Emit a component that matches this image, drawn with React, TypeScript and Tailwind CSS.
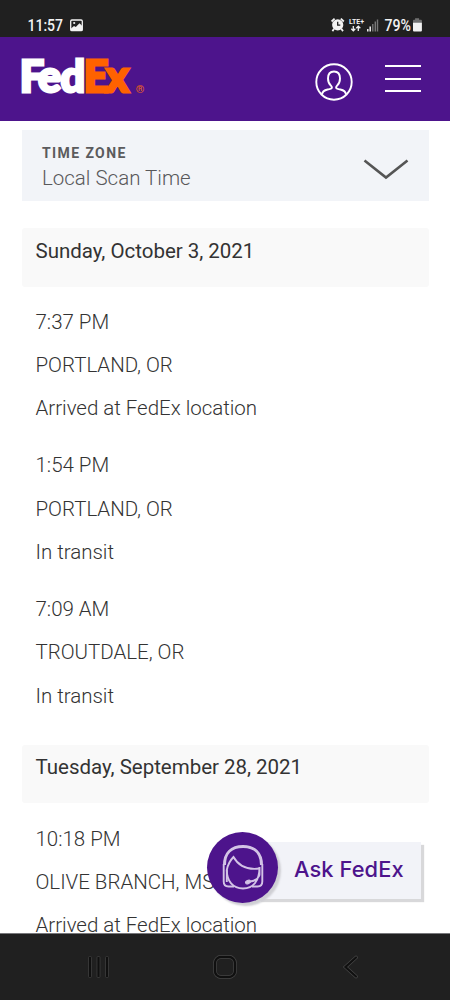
interface ScanEvent {
    time: string;
    place: string;
    status: string;
}

interface ScanDay {
    date: string;
    events: ScanEvent[];
}

const days: ScanDay[] = [
    {
        date: 'Sunday, October 3, 2021',
        events: [
            { time: '7:37 PM', place: 'PORTLAND, OR', status: 'Arrived at FedEx location' },
            { time: '1:54 PM', place: 'PORTLAND, OR', status: 'In transit' },
            { time: '7:09 AM', place: 'TROUTDALE, OR', status: 'In transit' },
        ],
    },
    {
        date: 'Tuesday, September 28, 2021',
        events: [
            { time: '10:18 PM', place: 'OLIVE BRANCH, MS', status: 'Arrived at FedEx location' },
        ],
    },
];

function StatusBar() {
    return (
        <div className="flex h-[37px] shrink-0 items-start justify-between bg-[#202020] pt-[15px] pr-[26px] pl-[28px] text-[#f2f2f2]">
            <svg width="60" height="20" viewBox="0 0 60 20">
                <text x="-0.5" y="15.5" textLength="35.5" lengthAdjust="spacingAndGlyphs" fontSize="16.5" fontWeight="500" fill="currentColor" fontFamily="Roboto, sans-serif">11:57</text>
                <rect x="42.7" y="5" width="11.6" height="10.6" rx="1.2" fill="none" stroke="currentColor" strokeWidth="1.3" />
                <circle cx="46.2" cy="8" r="1.1" fill="currentColor" />
                <path d="M43 13.5l3-2.6 1.8 1.2 3.7-3.8 2.8 2.7v4.4H43z" fill="currentColor" />
            </svg>
            <svg width="94" height="20" viewBox="0 0 94 20" fill="currentColor" fontFamily="Roboto, sans-serif">
                <circle cx="7.7" cy="9.9" r="5.6" />
                <path d="M7.7 6.8v3.4h2.6" fill="none" stroke="#202020" strokeWidth="1.3" />
                <path d="M1.6 6.5l3-2.8M13.8 6.5l-3-2.8M4.1 13.8l-1.7 2.3M11.3 13.8l1.7 2.3" fill="none" stroke="currentColor" strokeWidth="1.8" />
                <text x="19" y="9.2" textLength="15" lengthAdjust="spacingAndGlyphs" fontSize="7.8" fontWeight="700">LTE+</text>
                <path d="M23.3 11v4.8M21.3 13.7l2 2.2 2-2.2M28.3 16v-4.8M26.3 13.3l2-2.2 2 2.2" fill="none" stroke="currentColor" strokeWidth="1.3" />
                <path d="M37.8 14v2.4M40.2 11.4v5" fill="none" stroke="currentColor" strokeWidth="1.5" />
                <path d="M42.8 9v7.4M45.3 6.6v9.8M47.5 4.4v12" fill="none" stroke="#777777" strokeWidth="1.4" />
                <text x="54.5" y="15.5" textLength="26.5" lengthAdjust="spacingAndGlyphs" fontSize="16.5" fontWeight="500">79%</text>
                <path d="M85.1 3.3h4v1.5H91a.9.9 0 0 1 .9.9v2.6H83V5.7a.9.9 0 0 1 .9-.9h1.2z" fill="#707070" />
                <path d="M83 7.8h8.9v7.8a1 1 0 0 1-1 1H84a1 1 0 0 1-1-1z" />
            </svg>
        </div>
    );
}

function Header() {
    return (
        <header className="flex h-[84px] shrink-0 items-center justify-between bg-[#4d148c] pr-[29px] pl-[16px]">
            <svg width="134" height="66" viewBox="0 0 134 66" fontFamily="Lato, sans-serif" fontWeight="900" fontSize="43">
                <text x="3.7 22 44.6 67.8 90" y="46" fill="#ffffff" stroke="#ffffff" strokeWidth="2.8">
                    Fed<tspan fill="#ff6200" stroke="#ff6200">Ex</tspan>
                </text>
                <text x="119.8" y="47" fontFamily="Roboto, sans-serif" fontSize="11" fontWeight="700" fill="#e8601c">®</text>
            </svg>
            <div className="flex items-center gap-[32px]">
                <svg width="38" height="38" viewBox="0 0 38 38" fill="none" stroke="#ffffff" strokeWidth="1.9" className="mt-[6px]">
                    <circle cx="19" cy="19" r="17.7" />
                    <path d="M7 31.5c.3-3 2.4-4.3 5.6-5 2.7-.5 4.3-.6 4.3-2 0-.8-.4-1.2-1-1.8-1.8-1.8-2.9-4-2.9-7.2 0-4.4 2.3-7 6-7s6 2.6 6 7c0 3.2-1.1 5.4-2.9 7.2-.6.6-1 1-1 1.8 0 1.4 1.6 1.5 4.3 2 3.2.7 5.3 2 5.6 5" />
                </svg>
                <div className="mb-[1px] flex w-[36px] flex-col gap-[10.5px]">
                    <div className="h-[2px] bg-white" />
                    <div className="h-[2px] bg-white" />
                    <div className="h-[2px] bg-white" />
                </div>
            </div>
        </header>
    );
}

function TimeZoneSelect() {
    return (
        <div className="flex h-[71px] items-center justify-between bg-[#f2f4f8] pr-[20px] pl-[20.5px]">
            <div className="mt-[4px]">
                <div className="text-[14px] leading-[19px] font-bold tracking-[1.4px] text-[#5b5b5d]">TIME ZONE</div>
                <div className="mt-[1px] text-[20.5px] leading-[28px] font-light text-[#58585a]">Local Scan Time</div>
            </div>
            <svg width="46" height="22" viewBox="0 0 46 22" fill="none" stroke="#555555" strokeWidth="2.6" className="mt-[8px]">
                <path d="M1.5 1.5L23 18.5 44.5 1.5" />
            </svg>
        </div>
    );
}

function DaySection({ day }: { day: ScanDay }) {
    return (
        <section className="mt-[27px]">
            <h2 className="h-[58.5px] rounded-[3px] bg-[#f9f9f9] pt-[7.5px] pl-[14px] text-[20.5px] leading-[30px] font-normal tracking-[-0.02px] text-[#333333]">{day.date}</h2>
            {day.events.map((event) => (
                <div key={event.time} className="pt-[14.2px] pl-[14px] text-[20.5px] leading-[43.2px] font-light tracking-[-0.02px] text-[#333333]">
                    <div>{event.time}</div>
                    <div>{event.place}</div>
                    <div>{event.status}</div>
                </div>
            ))}
        </section>
    );
}

function AskButton() {
    return (
        <button className="absolute right-[29px] bottom-[30px] flex h-[72px] items-center">
            <span className="relative z-10 flex size-[71px] items-center justify-center rounded-full bg-[#4d148c] shadow-[3px_3px_2px_#cfcfd4]">
                <svg width="44" height="48" viewBox="0 0 44 48" fill="none" stroke="#d3c3e6">
                    <path d="M3.5 22C3.5 10 10.5 3.5 22 3.5S40.500 10 40.500 22" strokeWidth="3" />
                    <path d="M13 43.5H7.5C4.5 43.5 2.7 42 2.7 38.5V21M31 43.5h5.5c3 0 4.8-1.5 4.8-5V21" strokeWidth="1.9" />
                    <path d="M5.8 39V27c1-5.5 3.2-9.5 6.7-13 4.5 8 12.5 13.3 26 11.5" strokeWidth="1.9" />
                    <path d="M5.8 27c0 11 6 18.5 16.2 18.5S38.500 38 38.500 24v8c-1.500 4-5 6-9.500 6.500" strokeWidth="1.9" />
                    <ellipse cx="27" cy="39" rx="2.6" ry="1.7" transform="rotate(-25 27 39)" fill="#d3c3e6" />
                </svg>
            </span>
            <span className="-ml-[20px] mt-[7px] flex h-[57px] w-[163px] items-center bg-[#f2f3f8] pb-[3px] pl-[36px] font-[Inter,sans-serif] text-[21.8px] font-medium tracking-[0.1px] whitespace-nowrap text-[#4d148c] shadow-[3px_3px_1px_#d8d8da]">Ask FedEx</span>
        </button>
    );
}

function NavBar() {
    return (
        <nav className="flex h-[67px] shrink-0 items-center justify-between border-t border-[#77777a] bg-[#202020] px-[87px]">
            <svg width="23" height="24" viewBox="0 0 23 24" fill="#101010" stroke="#444444" strokeWidth="0.7">
                <rect x="1.5" y="1.5" width="3" height="21" rx="1" />
                <rect x="10" y="1.5" width="3" height="21" rx="1" />
                <rect x="18.5" y="1.5" width="3" height="21" rx="1" />
            </svg>
            <svg width="24" height="24" viewBox="0 0 24 24" fill="none">
                <rect x="2" y="2" width="20" height="20" rx="6" stroke="#484848" strokeWidth="3.8" />
                <rect x="2" y="2" width="20" height="20" rx="6" stroke="#101010" strokeWidth="2.4" />
            </svg>
            <svg width="23" height="24" viewBox="0 0 23 24" fill="none" strokeLinecap="round">
                <path d="M16 2.5L5.5 12 16 21.5" stroke="#484848" strokeWidth="3.6" />
                <path d="M16 2.5L5.5 12 16 21.5" stroke="#101010" strokeWidth="2.3" />
            </svg>
        </nav>
    );
}

export default function App() {
    return (
        <div className="flex h-[1000px] w-[450px] flex-col overflow-hidden bg-white font-[Roboto,sans-serif]">
            <StatusBar />
            <Header />
            <div className="relative min-h-0 flex-1">
                <main className="h-full overflow-hidden pt-[9px] pr-[21px] pl-[21.5px]">
                    <TimeZoneSelect />
                    {days.map((day) => (
                        <DaySection key={day.date} day={day} />
                    ))}
                </main>
                <AskButton />
            </div>
            <NavBar />
        </div>
    );
}
